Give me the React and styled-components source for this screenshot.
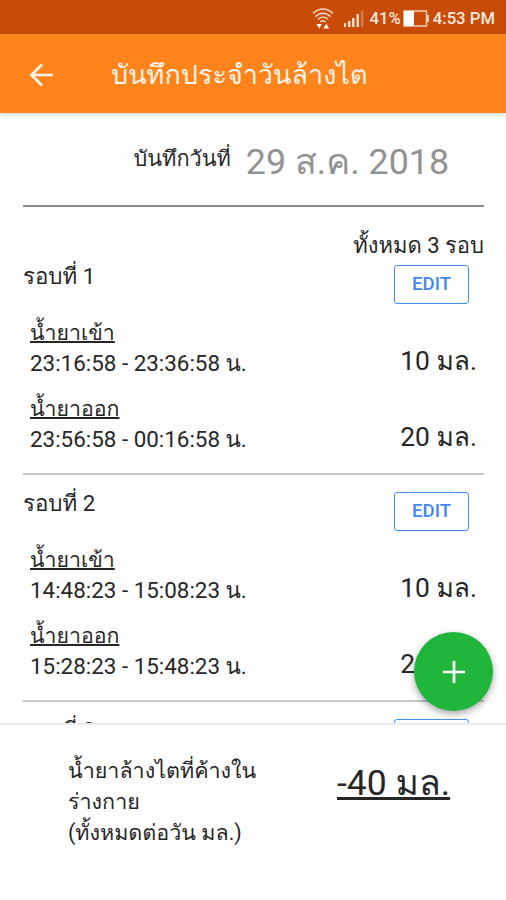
import React from "react";
import styled, { createGlobalStyle } from "styled-components";

const rounds = [
  {
    id: 1,
    entries: [
      { label: "น้ำยาเข้า", time: "23:16:58 - 23:36:58 น.", amount: "10 มล." },
      { label: "น้ำยาออก", time: "23:56:58 - 00:16:58 น.", amount: "20 มล." },
    ],
  },
  {
    id: 2,
    entries: [
      { label: "น้ำยาเข้า", time: "14:48:23 - 15:08:23 น.", amount: "10 มล." },
      { label: "น้ำยาออก", time: "15:28:23 - 15:48:23 น.", amount: "20 มล." },
    ],
  },
  { id: 3, entries: [] },
];

const App = () => {
  return (
    <>
      <GlobalStyle />
      <Screen>
        <StatusBar>
          <WifiIcon />
          <SignalIcon />
          <StatusText $gap={2}>41%</StatusText>
          <BatteryIcon />
          <StatusText>4:53 PM</StatusText>
        </StatusBar>

        <Header>
          <BackButton aria-label="back">
            <svg width="24" height="24" viewBox="0 0 24 24" fill="none">
              <path
                d="M23 12H2M12 1.5L1.5 12L12 22.5"
                stroke="#fff5ea"
                strokeWidth="2.7"
              />
            </svg>
          </BackButton>
          <Title>บันทึกประจำวันล้างไต</Title>
        </Header>

        <Content>
          <DateRow>
            <DateLabel>บันทึกวันที่</DateLabel>
            <DateValue>29 ส.ค. 2018</DateValue>
          </DateRow>
          <Total>ทั้งหมด 3 รอบ</Total>
          {rounds.map((round) => (
            <Round key={round.id}>
              <RoundHeader>
                <RoundTitle>รอบที่ {round.id}</RoundTitle>
                <EditButton>EDIT</EditButton>
              </RoundHeader>
              {round.entries.map((entry) => (
                <Entry key={entry.label}>
                  <div>
                    <EntryLabel>{entry.label}</EntryLabel>
                    <EntryTime>{entry.time}</EntryTime>
                  </div>
                  <Amount>{entry.amount}</Amount>
                </Entry>
              ))}
            </Round>
          ))}
        </Content>

        <Footer>
          <FooterLabel>
            น้ำยาล้างไตที่ค้างใน
            <br />
            ร่างกาย
            <br />
            (ทั้งหมดต่อวัน มล.)
          </FooterLabel>
          <FooterTotal>-40 มล.</FooterTotal>
        </Footer>

        <AddButton aria-label="add">
          <svg width="22" height="22" viewBox="0 0 22 22">
            <path d="M11 0V22M0 11H22" stroke="#fff" strokeWidth="2.7" />
          </svg>
        </AddButton>
      </Screen>
    </>
  );
};

const WifiIcon = () => (
  <StatusSvg $gap={10} width="22" height="22" viewBox="0 0 22 22" fill="none">
    <g stroke="#f8dccb" strokeWidth="1.5">
      <path d="M1 5.5C7 -0.5 15 -0.5 21 5.5" />
      <path d="M3.5 8.5C8 4 14 4 18.5 8.5" />
      <path d="M6 11.5C9 8.5 13 8.5 16 11.5" />
      <path d="M8.5 14C10 12.5 12 12.5 13.5 14" />
    </g>
    <path d="M4.5 16H10L7.2 20.5Z" fill="#fff" />
    <path d="M11.5 20.5H17L14.2 15.5Z" fill="#fff" />
  </StatusSvg>
);

const SignalIcon = () => (
  <StatusSvg $gap={5} width="20" height="18" viewBox="0 0 20 18">
    <rect x="0" y="13" width="2" height="4" fill="#f8dccb" />
    <rect x="4" y="11" width="2.5" height="6" fill="#f8dccb" />
    <rect x="8" y="8" width="2.5" height="9" fill="#f8dccb" />
    <rect x="12.5" y="4" width="2.5" height="13" fill="#f8dccb" />
    <rect x="17" y="0.5" width="2.5" height="16.5" fill="#d9794c" />
  </StatusSvg>
);

const BatteryIcon = () => (
  <StatusSvg $gap={4} width="26" height="17" viewBox="0 0 26 17">
    <rect
      x="1"
      y="1"
      width="22.5"
      height="15"
      fill="none"
      stroke="#f5cdb7"
      strokeWidth="1.5"
    />
    <rect x="1" y="1" width="10" height="15" fill="#fff" />
    <rect x="24" y="5" width="2" height="7" fill="#f5cdb7" />
  </StatusSvg>
);

const GlobalStyle = createGlobalStyle`
  * {
    box-sizing: border-box;
  }

  body {
    margin: 0;
    background: #fff;
    font-family: Roboto, Loma, sans-serif;
    color: #262626;
  }
`;

const Screen = styled.div`
  position: relative;
  display: flex;
  flex-direction: column;
  width: 506px;
  height: 900px;
  overflow: hidden;
  background: #fefefe;
`;

const StatusBar = styled.div`
  display: flex;
  flex: none;
  align-items: center;
  justify-content: flex-end;
  height: 34px;
  padding: 3px 11px 0 0;
  background: #c84b08;
`;

const StatusSvg = styled.svg`
  flex: none;
  margin-right: ${(props) => props.$gap}px;
`;

const StatusText = styled.span`
  margin-right: ${(props) => props.$gap || 0}px;
  color: #fbe9df;
  font-size: 16.7px;
  font-weight: 500;
  line-height: 20px;
  white-space: nowrap;
`;

const Header = styled.header`
  z-index: 1;
  display: flex;
  flex: none;
  align-items: center;
  height: 79px;
  padding: 3px 0 0 30px;
  background: #ff841c;
  box-shadow: 0 1px 4px rgba(70, 90, 130, 0.3);
`;

const BackButton = styled.button`
  display: flex;
  margin-right: 57px;
  padding: 0;
  border: 0;
  background: none;
`;

const Title = styled.h1`
  margin: 0;
  color: #fff5ea;
  font-size: 27px;
  font-weight: 500;
  line-height: 40px;
  white-space: nowrap;
`;

const Content = styled.main`
  flex: 1;
  min-height: 0;
  overflow: hidden;
  padding: 0 22px 0 23px;
`;

const DateRow = styled.div`
  display: flex;
  align-items: center;
  justify-content: flex-end;
  height: 94px;
  padding: 6px 35px 0 0;
  border-bottom: 2px solid #8c8c8c;
`;

const DateLabel = styled.span`
  margin: -6px 15px 0 0;
  font-size: 21.7px;
  line-height: 32px;
  white-space: nowrap;
`;

const DateValue = styled.span`
  color: #929292;
  font-size: 35.8px;
  line-height: 44px;
  white-space: nowrap;
`;

const Total = styled.div`
  height: 58px;
  padding-top: 24px;
  font-size: 22px;
  line-height: 30px;
  text-align: right;
  white-space: nowrap;
`;

const Round = styled.section`
  height: 226.5px;
  padding-top: 17px;
  border-bottom: 2px solid #c8c8c8;

  &:first-of-type {
    height: 210px;
    padding-top: 0;
  }
`;

const RoundHeader = styled.div`
  display: flex;
  align-items: flex-start;
  justify-content: space-between;
  height: 49px;
  padding-right: 15px;
`;

const RoundTitle = styled.span`
  font-size: 22.3px;
  line-height: 23px;
  white-space: nowrap;
`;

const EditButton = styled.button`
  width: 75px;
  height: 39px;
  padding: 0 0 2px;
  border: 1.5px solid #3f8ef0;
  border-radius: 3px;
  background: #fff;
  color: #4189ee;
  font-family: inherit;
  font-size: 18.6px;
  font-weight: 500;
`;

const Entry = styled.div`
  display: flex;
  align-items: flex-end;
  justify-content: space-between;
  height: 76px;
  padding: 0 7px 12px;
`;

const EntryLabel = styled.div`
  font-size: 21.3px;
  line-height: 31px;
  text-decoration: underline 1.5px;
  text-decoration-skip-ink: none;
`;

const EntryTime = styled.div`
  font-size: 22.4px;
  line-height: 30px;
  white-space: nowrap;
`;

const Amount = styled.span`
  font-size: 26.4px;
  line-height: 34px;
  white-space: nowrap;
`;

const Footer = styled.footer`
  z-index: 1;
  display: flex;
  flex: none;
  align-items: flex-start;
  height: 177px;
  padding: 30px 0 0 68px;
  border-top: 2px solid #ececec;
  background: #fefefe;
`;

const FooterLabel = styled.div`
  width: 269px;
  font-size: 21.5px;
  line-height: 31px;
  white-space: nowrap;
`;

const FooterTotal = styled.span`
  padding-top: 1px;
  font-size: 35.5px;
  line-height: 54px;
  text-decoration: underline;
  text-decoration-skip-ink: none;
  white-space: nowrap;
`;

const AddButton = styled.button`
  position: absolute;
  right: 13px;
  bottom: 189px;
  z-index: 2;
  display: flex;
  align-items: center;
  justify-content: center;
  width: 79px;
  height: 79px;
  padding: 0;
  border: 0;
  border-radius: 50%;
  background: #20b53b;
  box-shadow: 0 3px 7px rgba(0, 0, 0, 0.35);
`;

export default App;
